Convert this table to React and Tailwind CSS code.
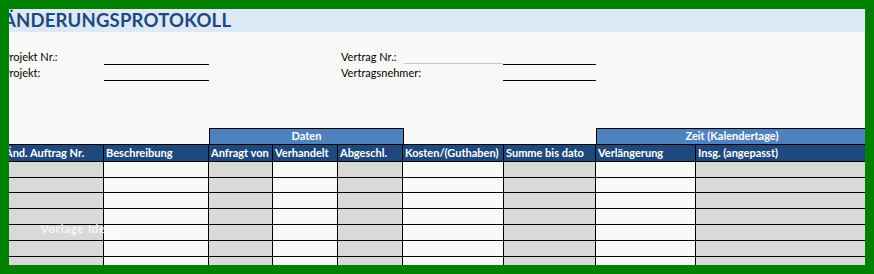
export default function App() {
  const cols = [
    { label: "Änd. Auftrag Nr.", gray: true },
    { label: "Beschreibung", gray: false },
    { label: "Anfragt von", gray: true },
    { label: "Verhandelt", gray: false },
    { label: "Abgeschl.", gray: true },
    { label: "Kosten/(Guthaben)", gray: false },
    { label: "Summe bis dato", gray: true },
    { label: "Verlängerung", gray: false },
    { label: "Insg. (angepasst)", gray: true },
  ];
  const widths = ["w-[101px]", "w-[105px]", "w-[64px]", "w-[65px]", "w-[65px]", "w-[101px]", "w-[92px]", "w-[100px]", "w-[200px]"];
  const rowHeights = ["h-[16px]", "h-[15px]", "h-[16px]", "h-[16px]", "h-[16px]", "h-[16px]", "h-[16px]"];

  return (
    <div className="w-[874px] h-[274px] bg-[#008000] p-[9px] box-border" style={{ fontFamily: "Lato, 'Open Sans', sans-serif" }}>
      <div className="relative w-[856px] h-[256px] overflow-hidden bg-[#f9faf8]">
        <div className="ml-[-6px] w-[1000px] flex flex-col">
          {/* Title band */}
          <div className="h-[23px] bg-[#dde9f4] flex items-center">
            <span className="text-[18.5px] font-bold leading-none text-[#1f497d] tracking-[0.2px]">ÄNDERUNGSPROTOKOLL</span>
          </div>

          {/* Fields */}
          <div className="mt-[17px] flex flex-col text-[11px] text-black">
            <div className="flex h-[16px] leading-[16px]">
              <div className="w-[101px]">Projekt Nr.:</div>
              <div className="w-[105px] border-b border-black h-[16px] box-border"></div>
              <div className="w-[132px]"></div>
              <div className="w-[63px]">Vertrag Nr.:</div>
              <div className="w-[99px] h-[15px] border-b border-[#c8c8c8] box-border"></div>
              <div className="w-[93px] border-b border-black h-[16px] box-border"></div>
            </div>
            <div className="flex h-[16px] leading-[16px]">
              <div className="w-[101px]">Projekt:</div>
              <div className="w-[105px] border-b border-black h-[16px] box-border"></div>
              <div className="w-[132px]"></div>
              <div className="w-[162px]">Vertragsnehmer:</div>
              <div className="w-[93px] border-b border-black h-[16px] box-border"></div>
            </div>
          </div>

          {/* Table */}
          <div className="mt-[47px] flex flex-col">
            {/* group header */}
            <div className="flex h-[16px]">
              <div className="w-[206px]"></div>
              <div className="w-[195px] h-[16px] box-border bg-[#4f81bd] border-t border-x border-black flex items-center justify-center text-white text-[11px] font-bold">Daten</div>
              <div className="w-[192px]"></div>
              <div className="w-[300px] h-[16px] box-border bg-[#4f81bd] border-t border-l border-black text-white text-[11px] font-bold">
                <div className="w-[270px] h-[15px] flex items-center justify-center">Zeit (Kalendertage)</div>
              </div>
            </div>
            {/* column header */}
            <div className="flex h-[18px] box-border border-y border-black bg-[#1f497d]">
              {cols.map((c, i) => (
                <div key={i} className={`${widths[i]} h-full box-border border-r border-black pl-[2px] text-white text-[11px] font-bold leading-[16px] whitespace-nowrap`}>
                  {c.label}
                </div>
              ))}
            </div>
            {/* data rows */}
            {rowHeights.map((h, r) => (
              <div key={r} className={`flex ${h} box-border border-b border-black`}>
                {cols.map((c, i) => (
                  <div key={i} className={`${widths[i]} h-full box-border border-r border-black ${c.gray ? "bg-[#d9dad8]" : "bg-[#f9faf8]"}`}></div>
                ))}
              </div>
            ))}
          </div>
        </div>

        {/* watermark */}
        <div className="absolute left-[32px] top-[214px] text-white text-[11px] tracking-[1px] leading-none">Vorlage Ideen</div>
      </div>
    </div>
  );
}
